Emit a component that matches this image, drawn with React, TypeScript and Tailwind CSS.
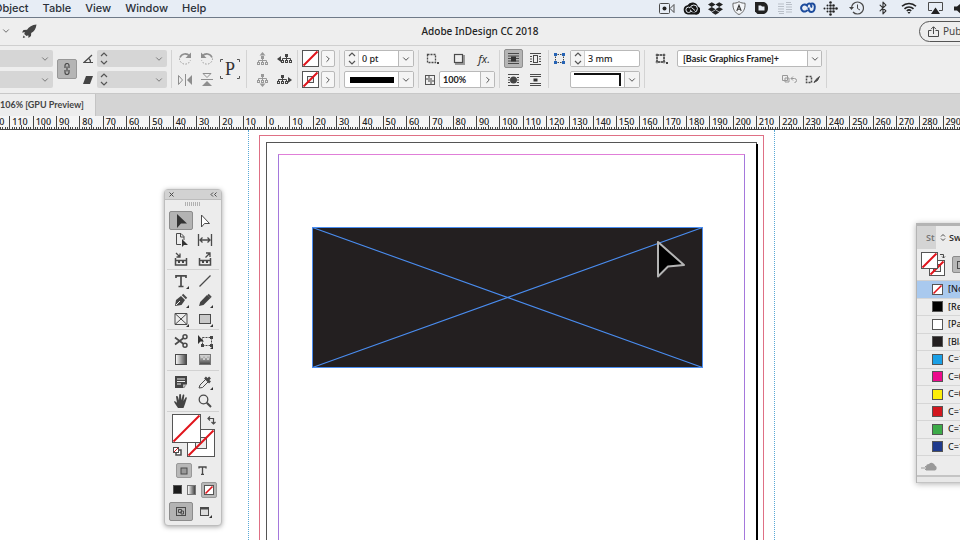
import { useState, type ReactNode } from "react";
import clsx from "clsx";
import { Bluetooth, ChevronDown, ChevronRight } from "lucide-react";
import { FaDropbox } from "react-icons/fa";

// one 10 mm step of the ruler at 106% zoom
const RULER_STEP = 70 / 3;
const RULER_FIRST = -120;
const RULER_LABELS = Array.from({ length: 60 }, (_, i) => Math.abs(RULER_FIRST + i * 10));

const SWATCHES = [
  { name: "[None]", fill: "none" },
  { name: "[Registration]", fill: "#000000" },
  { name: "[Paper]", fill: "#ffffff" },
  { name: "[Black]", fill: "#231f20" },
  { name: "C=100 M=0 Y=0 K=0", fill: "#1aa0e6" },
  { name: "C=0 M=100 Y=0 K=0", fill: "#ec0a8c" },
  { name: "C=0 M=0 Y=100 K=0", fill: "#fdee0a" },
  { name: "C=15 M=100 Y=100 K=0", fill: "#d2171e" },
  { name: "C=75 M=5 Y=100 K=0", fill: "#3dab49" },
  { name: "C=100 M=90 Y=10 K=0", fill: "#1f3a8c" },
];

function Icon({ w, h, children, className }: { w: number; h: number; children: ReactNode; className?: string }) {
  return (
    <svg width={w} height={h} viewBox={`0 0 ${w} ${h}`} fill="none" stroke="#4a4a4a" className={clsx("shrink-0", className)} aria-hidden="true">
      {children}
    </svg>
  );
}

function NoneBox({ size, stroke }: { size: number; stroke?: boolean }) {
  const inner = Math.round(size * 0.28) + 0.5;
  return (
    <Icon w={size} h={size}>
      <rect x=".5" y=".5" width={size - 1} height={size - 1} fill="#fff" stroke="#555" />
      {stroke && <rect x={inner} y={inner} width={size - inner * 2} height={size - inner * 2} fill="#eee" stroke="#555" />}
      <path d={`M1.5 ${size - 1.5}L${size - 1.5} 1.5`} stroke="#e0141b" strokeWidth={size > 14 ? 2 : 1.6} />
    </Icon>
  );
}

function Divider() {
  return <div className="h-[38px] w-px shrink-0 bg-[#d3d3d3]" />;
}

function Stepper() {
  return (
    <Icon w={8} h={13}>
      <path d="M1 4l3-3 3 3M1 9l3 3 3-3" stroke="#555" strokeWidth="1.2" />
    </Icon>
  );
}

function IconButton({ label, className, children }: { label: string; className?: string; children: ReactNode }) {
  return (
    <button type="button" aria-label={label} className={clsx("flex shrink-0 items-center justify-center", className)}>
      {children}
    </button>
  );
}

function DisabledField({ label, stepper }: { label: string; stepper?: boolean }) {
  return (
    <div className="flex h-[17px] w-[70px] items-center justify-between rounded-xs bg-[#d6d6d6] pr-[3px] pl-[3px]">
      {stepper ? <Stepper /> : <span />}
      <input aria-label={label} disabled className="min-w-0 flex-1" />
      <ChevronDown size={10} color="#666" />
    </div>
  );
}

function NumberField({ label, value, drop }: { label: string; value: string; drop?: boolean }) {
  return (
    <div className="flex h-[17px] w-[70px] items-stretch rounded-xs border border-[#b9b9b9] bg-white">
      <span className="flex w-[14px] shrink-0 items-center justify-center border-r border-[#cfcfcf] bg-[#f4f4f4]"><Stepper /></span>
      <input aria-label={label} defaultValue={value} className="w-0 min-w-0 flex-1 px-[3px] text-[9px] leading-[15px] font-medium text-[#222]" />
      {drop && <IconButton label={`${label} presets`} className="w-[15px] border-l border-[#b9b9b9] bg-[#f4f4f4]"><ChevronDown size={10} color="#333" /></IconButton>}
    </div>
  );
}

function DropButton({ label, children }: { label: string; children: ReactNode }) {
  return (
    <button type="button" aria-label={label} className="flex h-[17px] w-[70px] items-stretch rounded-xs border border-[#b9b9b9] bg-white">
      <span className="flex flex-1 items-center justify-center">{children}</span>
      <span className="flex w-[15px] items-center justify-center border-l border-[#b9b9b9] bg-[#f4f4f4]"><ChevronDown size={10} color="#333" /></span>
    </button>
  );
}

function Rows({ className, children }: { className?: string; children: ReactNode }) {
  return <div className={clsx("flex shrink-0 flex-col gap-1", className)}>{children}</div>;
}

function Row({ className, children }: { className?: string; children: ReactNode }) {
  return <div className={clsx("flex h-[17px] items-center", className)}>{children}</div>;
}

function TreeIcon({ dir }: { dir: "up" | "down" | "left" | "right" }) {
  const side = dir === "left" || dir === "right";
  const color = side ? "#444" : "#999";
  return (
    <Icon w={15} h={14}>
      <g transform={dir === "left" ? "translate(2 -1)" : dir === "right" ? "translate(-2 -1)" : dir === "up" ? "translate(0 1)" : "translate(0 -2)"} stroke={color}>
        <path d="M7.500 5v4M3.500 9.500V7.500h8v2" />
        <rect x="6.500" y="3.500" width="2" height="2" fill={color} />
        <rect x="2.500" y="9.500" width="2" height="2" />
        <rect x="6.500" y="9.500" width="2" height="2" />
        <rect x="10.500" y="9.500" width="2" height="2" />
      </g>
      {dir === "up" && <path d="M4.500 3.500L7.500 0l3 3.500z" fill={color} stroke="none" />}
      {dir === "down" && <path d="M4.500 10.500l3 3.500 3-3.500z" fill={color} stroke="none" />}
      {dir === "left" && <path d="M4 4L0 7l4 3z" fill={color} stroke="none" />}
      {dir === "right" && <path d="M11 4l4 3-4 3z" fill={color} stroke="none" />}
    </Icon>
  );
}

function MenuBar() {
  return (
    <header className="flex h-[18px] items-center justify-between overflow-hidden border-b border-[#6f7a88] bg-[#e7edf5] pb-px">
      <nav className="-ml-[6px] flex gap-[14px] font-['Inter','Liberation_Sans',sans-serif] text-[11px] leading-4 font-medium text-[#2b3038]">
        {["Object", "Table", "View", "Window", "Help"].map((m) => <button key={m} type="button">{m}</button>)}
      </nav>
      <div className="-mr-[14px] flex items-center">
        <span className="flex w-6 justify-center">
          <Icon w={16} h={11}>
            <rect x=".5" y=".5" width="10" height="10" rx="1" />
            <path d="M11 5.500l4-4v8z" />
            <circle cx="5.500" cy="5.500" r="2" fill="#222" stroke="none" />
          </Icon>
        </span>
        <span className="flex w-6 justify-center">
          <Icon w={17} h={13}>
            <path d="M5 12.500a4.700 4.700 0 01-.5-9.300A5.800 5.800 0 0115 4.500a4.300 4.300 0 01-3 8z" fill="#151515" stroke="none" />
            <circle cx="5.600" cy="7.800" r="2.700" stroke="#e7edf5" />
            <circle cx="10.800" cy="6.600" r="3.600" stroke="#e7edf5" />
            <path d="M7 6l4.500 4" stroke="#151515" strokeWidth="2" />
            <path d="M8.500 5.500l3.500 3" stroke="#e7edf5" />
          </Icon>
        </span>
        <span className="flex w-6 justify-center"><FaDropbox size={15} color="#222" /></span>
        <span className="flex w-[23px] justify-center">
          <Icon w={14} h={14}>
            <path d="M7 .7c2 1.300 4 1.500 6 1.500C13.500 8 11 12 7 13.500 3 12 .5 8 1 2.200 3 2.200 5 2 7 .7z" fill="#f3f5f8" stroke="#666" />
            <path d="M4.800 10L7 4.200 9.200 10M5.500 8.200h3" stroke="#333" strokeWidth="1.100" />
          </Icon>
        </span>
        <span className="flex w-[23px] justify-center">
          <Icon w={13} h={12}>
            <path d="M0 0h8c3 0 5 2.500 5 6s-2 6-5 6H2.500L0 9.500z" fill="#222" stroke="none" />
            <path d="M3.500 3.500H6l1 1h2.500v4h-6z" fill="#e7edf5" stroke="none" />
          </Icon>
        </span>
        <span className="flex w-[23px] justify-center">
          <Icon w={14} h={12}>
            <path d="M0 2h6M0 4.500h6M0 7h6M0 9.500h6M1 11.500h5M8 .5h5M8 2.500h6M8 5h6M8 7.500h6M8 10h6" stroke="#b9bfc8" strokeWidth="1.200" />
          </Icon>
        </span>
        <span className="flex w-[23px] justify-center">
          <Icon w={16} h={12}>
            <path d="M7.500 8a3.500 3.500 0 11-.5-4.500C7.500 1.500 9.500 1 10.500 2c1.500-1 4.300-.5 4.300 2.500 0 2.500-1 5.500-3.300 5.500-2.200 0-3-2-3-4.500M10.500 2.500c1 .8 1 2 .5 3" stroke="#1c4b9c" strokeWidth="2" />
          </Icon>
        </span>
        <span className="flex w-[23px] justify-center">
          <Icon w={15} h={15}>
            {[[7.5, 1.5], [4.5, 4.5], [7.5, 4.5], [10.5, 4.5], [1.5, 7.5], [4.5, 7.5], [7.5, 7.5], [10.5, 7.5], [13.5, 7.5], [4.5, 10.5], [7.5, 10.5], [10.5, 10.5], [7.5, 13.5]].map(([x, y]) => (
              <circle key={`${x}-${y}`} cx={x} cy={y} r={x > 5 ? 1.3 : 1} fill="#222" stroke="none" />
            ))}
          </Icon>
        </span>
        <span className="flex w-7 justify-center">
          <Icon w={15} h={14}>
            <path d="M2.500 7A6 6 0 118.500 13c-2 0-3.500-.8-4.500-2" strokeWidth="1.200" />
            <path d="M0 6h5L2.500 9z" fill="#444" stroke="none" />
            <path d="M8.500 3.500V7.500l2.500 1.500" />
          </Icon>
        </span>
        <span className="flex w-[26px] justify-center"><Bluetooth size={14} color="#333" strokeWidth={2} /></span>
        <span className="flex w-[26px] justify-center">
          <Icon w={16} h={12}>
            <path d="M1 4.300a10 10 0 0114 0M3.500 6.800a6.500 6.500 0 019 0M5.800 9a3.200 3.200 0 014.400 0" stroke="#222" strokeWidth="1.600" />
            <path d="M8 12L6.500 10h3z" fill="#222" stroke="none" />
          </Icon>
        </span>
        <span className="flex w-[26px] justify-center">
          <Icon w={15} h={12}>
            <path d="M4 8.500H.5v-8h14v8H11" />
            <path d="M7.500 5.500L12 12H3z" fill="#222" stroke="none" />
          </Icon>
        </span>
        <span className="flex w-[26px] justify-center">
          <Icon w={14} h={11}>
            <path d="M0 3.500h3L7 0v11L3 7.500H0z" fill="#222" stroke="none" />
            <path d="M9 3.500q2 2 0 4M11 1.500q4 4 0 8" />
          </Icon>
        </span>
      </div>
    </header>
  );
}

function TitleBar() {
  return (
    <div className="grid h-7 grid-cols-[1fr_auto_1fr] items-center overflow-hidden border-b border-[#cfcfcf] bg-[#eeeeee] pb-px">
      <div className="flex items-center gap-[11px] pl-px">
        <IconButton label="Arrange documents"><ChevronDown size={10} color="#555" /></IconButton>
        <IconButton label="GPU performance">
          <Icon w={15} h={15}>
            <path d="M14.500.5C10 .8 7 3 5 5.800L1.500 6 0 8.500l3-.2-.8 1.700L4.500 12l1.800-.8L6.500 14l2.500-2 .2-3C12 7.500 14 5 14.500.5zM1.500 11.500L.8 14l2.500-.8z" fill="#444" stroke="none" />
          </Icon>
        </IconButton>
      </div>
      <h1 className="text-[10px] leading-4 font-medium text-[#222]">Adobe InDesign CC 2018</h1>
      <div className="flex justify-end overflow-hidden">
        <button type="button" className="-mr-[57px] flex h-[21px] w-[98px] shrink-0 items-center gap-[4px] rounded-full border border-[#555] pl-2 text-[10px] whitespace-nowrap text-[#444]">
          <Icon w={11} h={11}>
            <path d="M3.500 4.500h-3v6h10v-6h-3M5.500 8V1M3 3.200L5.500.7 8 3.200" />
          </Icon>
          Publish Online
        </button>
      </div>
    </div>
  );
}

function ControlBar() {
  return (
    <div className="flex h-12 items-center gap-1 overflow-hidden border-b border-[#c8c8c8] bg-[#eeeeee] pb-px">
      <Rows className="-ml-[17px]">
        <DisabledField label="Scale X" />
        <DisabledField label="Scale Y" />
      </Rows>
      <IconButton label="Constrain proportions" className="h-5 w-5 rounded-xs border border-[#989898] bg-[#b5b5b5]">
        <Icon w={6} h={12}>
          <path d="M1 5V2.500a2 2 0 014 0V5M1 7v2.500a2 2 0 004 0V7M3 3.500v5" strokeWidth="1.200" />
        </Icon>
      </IconButton>
      <Rows className="w-3 items-end">
        <Row><Icon w={10} h={10}><path d="M9 1L1 8.500h9M5.500 4q2 1.500 2 4.500" strokeWidth="1.200" /></Icon></Row>
        <Row><Icon w={10} h={8}><path d="M3 0h7L7 8H0z" fill="#444" stroke="none" /></Icon></Row>
      </Rows>
      <Rows>
        <DisabledField label="Rotation angle" stepper />
        <DisabledField label="Shear angle" stepper />
      </Rows>
      <Divider />
      <Rows className="ml-[2px]">
        <Row className="gap-2">
          <IconButton label="Rotate clockwise"><Icon w={14} h={14}><path d="M11.500 4A5.500 5.500 0 002 5.500" stroke="#8e8e8e" strokeWidth="1.600" /><path d="M1.500 6.500a5.600 5.600 0 0011 1.500" stroke="#999" strokeDasharray="1.500 1.500" /><path d="M13 .5v5.500H7.500z" fill="#8e8e8e" stroke="none" /></Icon></IconButton>
          <IconButton label="Rotate anticlockwise"><Icon w={14} h={14}><path d="M2.500 4A5.500 5.500 0 0112 5.500" stroke="#8e8e8e" strokeWidth="1.600" /><path d="M12.500 6.500A5.600 5.600 0 011.500 8" stroke="#999" strokeDasharray="1.500 1.500" /><path d="M1 .5v5.500h5.500z" fill="#8e8e8e" stroke="none" /></Icon></IconButton>
        </Row>
        <Row className="gap-2">
          <IconButton label="Flip horizontal"><Icon w={14} h={12}><path d="M.5 1.500v9L4.500 6zM7.500 0v12" stroke="#8e8e8e" /><path d="M14 1v10L9 6z" fill="#8e8e8e" stroke="none" /></Icon></IconButton>
          <IconButton label="Flip vertical"><Icon w={14} h={13}><path d="M3 .5h8L7 4.500zM1 6.500h12" stroke="#8e8e8e" /><path d="M2 13h10L7 8z" fill="#8e8e8e" stroke="none" /></Icon></IconButton>
        </Row>
      </Rows>
      <div className="relative mx-[2px] flex h-5 w-5 items-center justify-center">
        <Icon w={20} h={20} className="absolute inset-0">
          <path d="M.5 3V.5H3M17 .5h2.500V3M.5 17v2.500H3M17 19.500h2.500V17" stroke="#555" />
        </Icon>
        <span className="font-['Liberation_Serif',serif] text-[18px] leading-5 text-[#333]">P</span>
      </div>
      <Divider />
      <Rows className="mr-px ml-1">
        <Row className="gap-[7px]"><IconButton label="Select container"><TreeIcon dir="up" /></IconButton><IconButton label="Select previous"><TreeIcon dir="left" /></IconButton></Row>
        <Row className="gap-[7px]"><IconButton label="Select content"><TreeIcon dir="down" /></IconButton><IconButton label="Select next"><TreeIcon dir="right" /></IconButton></Row>
      </Rows>
      <Divider />
      <Rows>
        <Row className="gap-[2px]">
          <IconButton label="Fill"><NoneBox size={17} /></IconButton>
          <IconButton label="Fill options" className="h-[17px] w-[14px] rounded-xs border border-[#b9b9b9] bg-[#f6f6f6]"><ChevronRight size={10} color="#333" /></IconButton>
        </Row>
        <Row className="gap-[2px]">
          <IconButton label="Stroke"><NoneBox size={17} stroke /></IconButton>
          <IconButton label="Stroke options" className="h-[17px] w-[14px] rounded-xs border border-[#b9b9b9] bg-[#f6f6f6]"><ChevronRight size={10} color="#333" /></IconButton>
        </Row>
      </Rows>
      <Divider />
      <Rows>
        <NumberField label="Stroke weight" value="0 pt" drop />
        <DropButton label="Stroke type"><span className="h-[6px] w-11 bg-black" /></DropButton>
      </Rows>
      <Divider />
      <Rows className="w-[72px]">
        <Row className="justify-between pr-[5px] pl-[3px]">
          <IconButton label="Corner shape"><Icon w={13} h={11}><rect x="1.500" y="1.500" width="8" height="8" strokeDasharray="2 1" strokeWidth="1.300" /><path d="M11 9h2v2h-2z" fill="#444" stroke="none" /></Icon></IconButton>
          <IconButton label="Drop shadow"><Icon w={12} h={12}><path d="M2 11h9V2" stroke="#999" strokeWidth="2" /><rect x="1.500" y="1.500" width="8" height="8" strokeWidth="1.200" fill="#eee" /></Icon></IconButton>
          <button type="button" className="text-[11px] leading-4 text-[#333] italic">fx.</button>
        </Row>
        <Row className="justify-between pl-[2px]">
          <Icon w={10} h={10}><rect x=".5" y=".5" width="9" height="9" stroke="#555" /><path d="M3 1h2v2h2v2h2v2H7v2H5V7H3V5H1V3h2z" fill="#999" stroke="none" /></Icon>
          <span className="flex h-[17px] w-[56px] rounded-xs border border-[#b9b9b9] bg-white">
            <input aria-label="Opacity" defaultValue="100%" className="w-0 min-w-0 flex-1 pl-[3px] font-['Lato','Noto_Sans',sans-serif] text-[9px] leading-[15px] font-bold text-[#222]" />
            <IconButton label="Opacity slider" className="w-[14px] border-l border-[#b9b9b9] bg-[#f4f4f4]"><ChevronRight size={10} color="#333" /></IconButton>
          </span>
        </Row>
      </Rows>
      <Divider />
      <Rows>
        <Row className="gap-[6px]">
          <IconButton label="No text wrap" className="h-[19px] w-[19px] rounded-xs border border-[#8f8f8f] bg-[#b5b5b5]">
            <Icon w={13} h={12}><path d="M1 .5h11M1 3h11M1 5.500h11M1 8h11M1 10.500h11" /><path d="M4 3.500h5v5H4z" fill="#333" stroke="none" /></Icon>
          </IconButton>
          <IconButton label="Wrap around bounding box"><Icon w={13} h={12}><path d="M1 .5h11M1 3.500h2M1 6h2M1 8.500h2M10 3.500h2M10 6h2M10 8.500h2M1 11.500h11" /><rect x="4.500" y="2.500" width="4" height="7" /></Icon></IconButton>
        </Row>
        <Row className="gap-[9px] pl-[3px]">
          <IconButton label="Wrap around object shape"><Icon w={13} h={12}><path d="M1 .5h11M1 3.500h2M1 6h2M1 8.500h2M10 3.500h2M10 6h2M10 8.500h2M1 11.500h11" /><circle cx="6.500" cy="6" r="3.500" fill="#444" stroke="none" /></Icon></IconButton>
          <IconButton label="Jump object"><Icon w={13} h={12}><path d="M1 .5h11M1 2.500h11M1 9.500h11M1 11.500h11" /><path d="M4.500 4.500h4v3h-4z" fill="#333" stroke="none" /></Icon></IconButton>
        </Row>
      </Rows>
      <div className="ml-[2px] flex"><Divider /></div>
      <Rows className="w-[13px]">
        <Row>
          <Icon w={13} h={13}>
            <path d="M2 2.500h9M2 10.500h9M2.500 2v9M10.500 2v9" strokeDasharray="1.500 1" />
            <path d="M1 1h3v3H1zM9 1h3v3H9zM1 9h3v3H1zM9 9h3v3H9z" fill="#2563b5" stroke="none" />
          </Icon>
        </Row>
        <Row>{null}</Row>
      </Rows>
      <Rows>
        <NumberField label="Corner size" value="3 mm" />
        <DropButton label="Corner option"><Icon w={48} h={13}><path d="M0 1h46v12" stroke="#111" strokeWidth="2" /></Icon></DropButton>
      </Rows>
      <Divider />
      <div className="flex flex-col gap-1 pl-[6px]">
        <Row className="gap-2">
          <Icon w={14} h={12}><rect x="2" y="2" width="7" height="7" strokeDasharray="2 1" strokeWidth="1.500" /><path d="M.5 2h10M.5 9h10M2 .5v10M9 .5v10" strokeWidth=".8" /><path d="M11 9h2v2h-2z" fill="#444" stroke="none" /></Icon>
          <div className="relative flex h-[17px] w-[145px]">
            <select aria-label="Object style" className="w-full appearance-none rounded-xs border border-[#b9b9b9] bg-white pl-[5px] font-['Lato','Noto_Sans',sans-serif] text-[9px] leading-[15px] font-bold text-[#222]">
              <option>[Basic Graphics Frame]+</option>
            </select>
            <span className="pointer-events-none absolute inset-y-px right-px flex w-[14px] items-center justify-center border-l border-[#b9b9b9] bg-[#f4f4f4]"><ChevronDown size={10} color="#333" /></span>
          </div>
        </Row>
        <Row className="justify-end gap-2 pr-[2px]">
          <IconButton label="Clear overrides"><Icon w={15} h={9}><path d="M.5.500h5v5h-5zM3 3h4v4H3zM9 3.500h3.500q2 0 2 2t-2 2M11 1.500l-2 2 2 2" stroke="#999" /></Icon></IconButton>
          <IconButton label="Clear attributes"><Icon w={15} h={9}><rect x="1.500" y="1.500" width="5" height="6" strokeDasharray="2 1" strokeWidth="1.500" /><path d="M9 7.500l2-3 3.500-3-2 4z" fill="#444" /></Icon></IconButton>
        </Row>
      </div>
      <Divider />
    </div>
  );
}

function Ruler() {
  const ticks = RULER_LABELS.flatMap((_, i) =>
    Array.from({ length: 10 }, (_, j) => {
      const x = Math.round((i + j / 10) * RULER_STEP) + 0.5;
      return `M${x} 13V${j === 0 ? 0 : j === 5 ? 9 : 11}`;
    })
  );
  return (
    <div className="relative h-[14px] overflow-hidden border-b border-[#444] bg-[#f5f5f5]">
      <svg width="1400" height="13" className="absolute -left-[14px] top-0" stroke="#444" strokeWidth="1" aria-hidden="true">
        <path d={ticks.join("")} />
      </svg>
      <div className="-ml-[14px] flex">
        {RULER_LABELS.map((n, i) => (
          <span key={i} className="shrink-0 pl-[3px] text-[9px] leading-[11px] font-medium text-[#222]" style={{ width: RULER_STEP }}>{n}</span>
        ))}
      </div>
    </div>
  );
}

function Document() {
  return (
    <main className="relative flex-1 overflow-hidden bg-white">
      <div className="absolute inset-y-0 left-[248px] w-[527px] border-x border-dotted border-x-[#5aa9d6]" />
      <div className="absolute -bottom-4 left-[259px] top-[5px] w-[505px] border border-[#df7085]" />
      <div className="absolute -bottom-4 left-[266px] top-[12px] w-[491px] border border-[#555]" />
      <div className="absolute -bottom-4 left-[756px] top-[14px] w-[2px] bg-black" />
      <div className="absolute -bottom-4 left-[278px] top-[24px] w-[467px] border border-[#a578dc] border-t-[#e07fd8]" />
      <svg width="391" height="142" viewBox="0 0 391 142" className="absolute left-[312px] top-[97px]" aria-label="Graphics frame">
        <rect x=".5" y=".5" width="390" height="140" fill="#231f20" stroke="#4a8df0" />
        <path d="M.5.500l390 140M.5 140.500L390.500.500" stroke="#4a8df0" strokeWidth="1.100" />
      </svg>
      <svg width="31" height="40" viewBox="0 0 31 40" className="absolute left-[656px] top-[110px]" aria-hidden="true">
        <path d="M2 2v34.500l10-10 16-1.500z" fill="#000" stroke="#b4b4b4" strokeWidth="2" strokeLinejoin="round" />
      </svg>
    </main>
  );
}

const corner = <path d="M17 14v3h-3z" fill="#333" stroke="none" />;

const TOOLS: { name: string; art: ReactNode }[][] = [
  [
    { name: "Selection", art: <path d="M5 2v14l4-4.500h6z" fill="#333" stroke="none" /> },
    { name: "Direct selection", art: <path d="M5.500 3v12l3-3.500h5z" fill="#fff" /> },
    { name: "Page", art: <><path d="M12 9V5.500l-3-3H4.500v11H9M8.500 2.500V6H12" /><path d="M10 8v8l2-2h4z" fill="#333" stroke="none" /></> },
    { name: "Gap", art: <path d="M2.500 3v12M15.500 3v12M4 9h10M6.500 6.500L4 9l2.500 2.500M11.500 6.500L14 9l-2.500 2.500" strokeWidth="1.300" /> },
    { name: "Content collector", art: <><path d="M3.500 8v7h11V8M3.500 10.500h11" strokeWidth="1.500" /><path d="M6 11h2v2H6zM10 11h2v2h-2z" fill="#444" stroke="none" /><path d="M4 3l4 4M8 3.500V7H4.500" strokeWidth="1.300" /></> },
    { name: "Content placer", art: <><path d="M3.500 8v7h11V8M3.500 10.500h11" strokeWidth="1.500" /><path d="M6 11h2v2H6zM10 11h2v2h-2z" fill="#444" stroke="none" /><path d="M9.500 7.500l4-4M10 3h4v4" strokeWidth="1.300" /></> },
  ],
  [
    { name: "Type", art: <><path d="M4 6V3.800h10V6M9 4v10.500M6.500 14.500h5" strokeWidth="1.700" />{corner}</> },
    { name: "Line", art: <path d="M3.500 14.500l11-11" strokeWidth="1.300" /> },
    { name: "Pen", art: <><path d="M3 15l1-6 5-4 4 4-3.500 5z" fill="#444" stroke="none" /><path d="M10.500 3.500l4 4" strokeWidth="2" /><path d="M4 14l4-4" stroke="#eee" />{corner}</> },
    { name: "Pencil", art: <><path d="M3 15l1.200-4L11 4l3.500 3-7 7z" fill="#444" stroke="none" /><path d="M12 3.500l3 3" strokeWidth="2" />{corner}</> },
    { name: "Rectangle frame", art: <><path d="M3 3.500h12v11H3zM3 3.500l12 11M15 3.500l-12 11" />{corner}</> },
    { name: "Rectangle", art: <><rect x="3.500" y="4.500" width="11" height="9" fill="#c9c9c9" />{corner}</> },
  ],
  [
    { name: "Scissors", art: <><circle cx="13" cy="4.800" r="2" strokeWidth="1.500" /><circle cx="13" cy="13.200" r="2" strokeWidth="1.500" /><path d="M11.300 6.200L3 12.500M11.300 11.800L3 5.500" strokeWidth="1.700" /></> },
    { name: "Free transform", art: <><rect x="6.500" y="5.500" width="9" height="8" strokeDasharray="2 1" /><path d="M14 4h3v3h-3zM14 12h3v3h-3zM5 12h3v3H5z" fill="#444" stroke="none" /><path d="M2 3v9l2.500-2.500H8z" fill="#333" stroke="none" />{corner}</> },
    { name: "Gradient swatch", art: <rect x="3.500" y="3.500" width="11" height="10" fill="url(#gradH)" /> },
    { name: "Gradient feather", art: <><rect x="3.500" y="3.500" width="11" height="10" fill="url(#gradV)" stroke="#777" /><path d="M5 5h2v2H5zM9 5h2v2H9zM7 7h2v2H7zM11 7h2v2h-2z" fill="#ccc" stroke="none" /></> },
  ],
  [
    { name: "Note", art: <><path d="M3 3h12v8l-3 4H3z" fill="#444" stroke="none" /><path d="M5 6h8M5 8.500h8M5 11h4" stroke="#eee" /><path d="M11 11.500h4l-4 3.500z" fill="#bbb" stroke="none" /></> },
    { name: "Eyedropper", art: <><path d="M3 15l1-3 6-6 2.500 2.500-6 6z" /><path d="M9 4.500l5 5M11.500 7L14 4.500" strokeWidth="2.600" />{corner}</> },
    { name: "Hand", art: <path d="M6 16c-1-2-3.500-4.500-4-6.500 1-.7 2 .2 3 1.500L4 4.500c1-1 1.700-.3 2 .5l1 3.500.2-6c.7-1 1.700-.7 1.800.2l.3 5.600L10.700 3c.8-.8 1.700-.3 1.600.6L11.500 9l2-3.500c.9-.6 1.500 0 1.300.8L13 12l-1.500 4z" fill="#444" stroke="none" /> },
    { name: "Zoom", art: <><circle cx="7.500" cy="7.500" r="4.300" strokeWidth="1.300" /><path d="M10.800 10.800l4.200 4.200" strokeWidth="2" /></> },
  ],
];

function ToolsPanel() {
  const [tool, setTool] = useState("Selection");
  return (
    <aside aria-label="Tools" className="absolute left-[164px] top-[189px] w-[58px] rounded-sm border border-[#bdbdbd] bg-[#ececec] shadow-[0_1px_5px_rgba(0,0,0,0.35)]">
      <div className="flex h-[10px] items-center justify-between border-b border-[#bcbcbc] bg-[#d2d2d2] px-[4px]">
        <IconButton label="Close"><Icon w={5} h={5}><path d="M.5.500l4 4M4.500.500l-4 4" /></Icon></IconButton>
        <IconButton label="Collapse"><Icon w={7} h={5}><path d="M3 .5l-2 2 2 2M6.500.500l-2 2 2 2" /></Icon></IconButton>
      </div>
      <div className="flex h-[11px] items-start justify-center pt-[2px]">
        <Icon w={16} h={4}><path d="M.5 0v4M2.500 0v4M4.500 0v4M6.500 0v4M8.500 0v4M10.500 0v4M12.500 0v4M14.500 0v4" stroke="#b0b0b0" /></Icon>
      </div>
      <svg width="0" height="0" className="absolute" aria-hidden="true">
        <linearGradient id="gradH"><stop offset="0" stopColor="#fff" /><stop offset="1" stopColor="#444" /></linearGradient>
        <linearGradient id="gradV" x2="0" y2="1"><stop offset="0" stopColor="#ddd" /><stop offset="1" stopColor="#444" /></linearGradient>
      </svg>
      {TOOLS.map((group, i) => (
        <div key={i} className="mx-[2px] mb-px grid grid-cols-2 border-b border-[#d2d2d2] px-[2px] pb-px">
          {group.map((t) => (
            <button
              key={t.name}
              type="button"
              aria-label={t.name}
              aria-pressed={tool === t.name}
              onClick={() => setTool(t.name)}
              className={clsx("flex h-[19px] items-center justify-center rounded-xs border", tool === t.name ? "border-[#8c8c8c] bg-[#b3b3b3]" : "border-transparent")}
            >
              <Icon w={18} h={18}>{t.art}</Icon>
            </button>
          ))}
        </div>
      ))}
      <div className="relative h-[50px]">
        <div className="absolute left-[22px] top-[16px]"><NoneBox size={28} stroke /></div>
        <div className="absolute left-[7px] top-[1px]"><NoneBox size={29} /></div>
        <Icon w={9} h={9} className="absolute left-[42px] top-[3px]"><path d="M3 .5L1 2.500l2 2M1 2.500h5.500V8M4.500 6l2 2 2-2" strokeWidth="1.200" /></Icon>
        <Icon w={9} h={9} className="absolute left-[8px] top-[34px]"><rect x="3" y="3" width="5" height="5" fill="#fff" strokeWidth="1.500" /><rect x=".5" y=".5" width="5" height="5" fill="#fff" /><path d="M1 5l4-4" stroke="#d9191f" /></Icon>
      </div>
      <div className="flex h-[15px] items-center gap-[6px] pl-[11px]">
        <IconButton label="Formatting affects container" className="h-[15px] w-4 rounded-xs border border-[#999] bg-[#b8b8b8]"><Icon w={8} h={8}><rect x="1" y="1" width="6" height="6" fill="#999" /></Icon></IconButton>
        <IconButton label="Formatting affects text"><Icon w={9} h={9}><path d="M1 2.500V1h7v1.500M4.500 1v7.500M3 8.500h3" strokeWidth="1.300" /></Icon></IconButton>
      </div>
      <div className="mt-[3px] flex h-[17px] items-center justify-between pr-1 pl-2">
        <IconButton label="Apply colour"><span className="size-[9px] border border-[#555] bg-[#1c1c1c]" /></IconButton>
        <IconButton label="Apply gradient"><span className="h-[10px] w-[9px] border border-[#777] bg-linear-to-r from-white to-[#444]" /></IconButton>
        <IconButton label="Apply none" className="size-4 rounded-xs border border-[#999] bg-[#b8b8b8]"><NoneBox size={10} /></IconButton>
      </div>
      <div className="mt-1 mb-[4px] grid h-[19px] grid-cols-2 px-1">
        <IconButton label="Normal view" className="rounded-xs border border-[#8c8c8c] bg-[#b3b3b3]"><Icon w={10} h={9}><rect x=".5" y=".5" width="9" height="8" /><path d="M2.500 2.500h3v3h-3zM5 4h2.500v3H5z" /></Icon></IconButton>
        <IconButton label="Screen mode"><Icon w={14} h={12}><rect x="2.500" y="1.500" width="8" height="8" fill="#ddd" /><path d="M2 2.500h9" strokeWidth="2" /><path d="M14 9v3h-3z" fill="#333" stroke="none" /></Icon></IconButton>
      </div>
    </aside>
  );
}

function SwatchesPanel() {
  const [selected, setSelected] = useState("[None]");
  return (
    <aside aria-label="Swatches" className="absolute -right-[157px] top-[223px] w-[201px] border-t-[3px] border-l border-[#b4b4b4] bg-[#ececec] shadow-[0_1px_6px_rgba(0,0,0,0.3)]">
      <div className="flex h-[23px] items-stretch bg-[#d4d4d4] text-[9px] font-semibold">
        <button type="button" className="w-[19px] pl-[9px] text-left text-[#777]">St</button>
        <button type="button" className="flex items-center gap-[3px] bg-[#ececec] px-[4px] text-[#333]">
          <Icon w={6} h={9}><path d="M1 3.500l2-2 2 2M1 5.500l2 2 2-2" /></Icon>
          Swatches
        </button>
      </div>
      <div className="flex h-8 items-center gap-[5px] border-b border-[#d0d0d0] pl-[4px]">
        <div className="relative h-[25px] w-[26px]">
          <div className="absolute top-[8px] left-[8px]"><NoneBox size={16} stroke /></div>
          <div className="absolute top-0 left-0"><NoneBox size={17} /></div>
          <Icon w={6} h={6} className="absolute top-px right-px"><path d="M0 1.500h3.500V5M2 3.500L3.500 5 5 3.500" /></Icon>
        </div>
        <IconButton label="Formatting affects container" className="h-[17px] w-[17px] rounded-xs border border-[#8c8c8c] bg-[#b8b8b8]"><Icon w={8} h={8}><rect x=".5" y=".5" width="7" height="7" /></Icon></IconButton>
      </div>
      <ul className="flex h-[175px] flex-col">
        {SWATCHES.map((s) => (
          <li key={s.name} className="flex min-h-0 flex-1">
            <button
              type="button"
              onClick={() => setSelected(s.name)}
              className={clsx("flex w-full items-center gap-[5px] border-b border-[#d6d6d6] pl-[15px] text-[9px] leading-3 font-medium whitespace-nowrap text-[#222]", selected === s.name && "bg-[#a9c9ee]")}
            >
              {s.fill === "none" ? <NoneBox size={11} /> : <span className="size-[11px] border border-[#555]" style={{ backgroundColor: s.fill }} />}
              {s.name}
            </button>
          </li>
        ))}
      </ul>
      <div className="flex h-[21px] items-center border-b-2 border-[#c4c4c4] pl-[4px]">
        <Icon w={16} h={10}><path d="M5 9.500V6a3 3 0 013-3 3.500 3.500 0 016 1.500 2.700 2.700 0 010 5z" fill="#999" stroke="none" /><path d="M0 7h6M4 5l2 2-2 2" stroke="#999" /></Icon>
      </div>
      <div className="h-[6px] border-b border-[#c4c4c4] bg-[#e8e8e8]" />
    </aside>
  );
}

export default function App() {
  return (
    <div className="relative flex h-screen flex-col overflow-hidden bg-white font-['Noto_Sans','Open_Sans',sans-serif]">
      <MenuBar />
      <TitleBar />
      <ControlBar />
      <div className="flex h-[22px] items-stretch bg-[#d4d4d4]">
        <button type="button" className="border-r border-[#c4c4c4] bg-[#ededed] pr-[11px] pl-0 font-['Lato','Noto_Sans',sans-serif] text-[9px] font-bold text-[#444]">106% [GPU Preview]</button>
      </div>
      <Ruler />
      <Document />
      <ToolsPanel />
      <SwatchesPanel />
    </div>
  );
}
